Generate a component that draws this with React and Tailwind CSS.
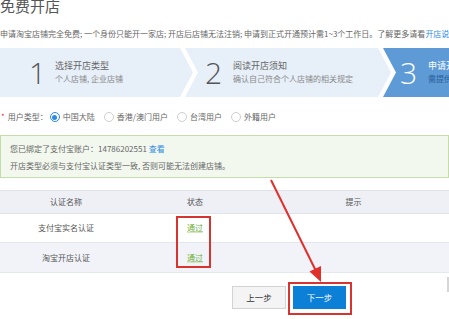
import React from 'react';

const cjk = { fontFamily: '"Noto Sans CJK SC", "Noto Sans", sans-serif' };

function Radio({ checked }) {
  if (checked) {
    return (
      <span className="w-[10px] h-[10px] rounded-full border border-[#2f8ae5] flex items-center justify-center mr-[3px]">
        <span className="w-[5px] h-[5px] rounded-full bg-[#2f8ae5]" />
      </span>
    );
  }
  return <span className="w-[10px] h-[10px] rounded-full border border-[#cfcfcf] bg-white mr-[3px]" />;
}

export default function App() {
  const options = [
    { label: '中国大陆', checked: true },
    { label: '香港/澳门用户' },
    { label: '台湾用户' },
    { label: '外籍用户' },
  ];

  const rows = [
    { name: '支付宝实名认证', status: '通过', bg: 'bg-white' },
    { name: '淘宝开店认证', status: '通过', bg: 'bg-[#f1f3f8]' },
  ];

  return (
    <div className="relative w-[449px] h-[319px] overflow-hidden bg-white text-[#666]" style={cjk}>
      {/* Title */}
      <div className="-mt-[2px] h-[16px] leading-[16px] text-[15px] text-[#555] whitespace-nowrap">免费开店</div>

      {/* Notice */}
      <div className="mt-[13px] h-[14px] leading-[14px] text-[8px] text-[#666] whitespace-nowrap">
        申请淘宝店铺完全免费; 一个身份只能开一家店; 开店后店铺无法注销; 申请到正式开通预计需1~3个工作日。了解更多请看
        <span className="text-[#2f8ae5]">开店说明</span>
      </div>

      {/* Steps */}
      <div className="mt-[7px] h-[49px] flex">
        <div className="w-[193px] shrink-0 h-full bg-[#e7eff9] flex items-center [clip-path:polygon(0_0,180px_0,193px_50%,180px_100%,0_100%)]">
          <span className="ml-[29px] w-[18px] text-[30px] font-light leading-none text-[#555]" style={{ fontFamily: '"Open Sans", sans-serif' }}>1</span>
          <div className="ml-[8px] flex flex-col">
            <span className="text-[9px] leading-[12px] text-[#666]">选择开店类型</span>
            <span className="text-[8px] leading-[12px] text-[#888] mt-[1px]">个人店铺, 企业店铺</span>
          </div>
        </div>
        <div className="-ml-[8px] w-[206px] shrink-0 h-full bg-[#e7eff9] flex items-center [clip-path:polygon(0_0,193px_0,206px_50%,193px_100%,0_100%,13px_50%)]">
          <span className="ml-[20px] w-[18px] text-[30px] font-light leading-none text-[#555]" style={{ fontFamily: '"Open Sans", sans-serif' }}>2</span>
          <div className="ml-[10px] flex flex-col">
            <span className="text-[9px] leading-[12px] text-[#666]">阅读开店须知</span>
            <span className="text-[8px] leading-[12px] text-[#888] mt-[1px] whitespace-nowrap">确认自己符合个人店铺的相关规定</span>
          </div>
        </div>
        <div className="-ml-[8px] flex-1 h-full bg-[#5d9ad6] flex items-center [clip-path:polygon(0_0,100%_0,100%_100%,0_100%,13px_50%)]">
          <span className="ml-[17px] w-[18px] text-[30px] font-light leading-none text-white" style={{ fontFamily: '"Open Sans", sans-serif' }}>3</span>
          <div className="ml-[10px] flex flex-col whitespace-nowrap">
            <span className="text-[9px] leading-[12px] text-white">申请开店认证</span>
            <span className="text-[8px] leading-[12px] text-[#2a5f9a] mt-[1px]">需提供认证相关资料</span>
          </div>
        </div>
      </div>

      {/* User type */}
      <div className="mt-[10px] h-[20px] flex items-center text-[8px] whitespace-nowrap">
        <span className="ml-[1px] text-[#e4393c]">*</span>
        <span className="ml-[3px] mr-[2px] text-[#666]">用户类型：</span>
        {options.map((o, i) => (
          <span key={o.label} className={`flex items-center ${i > 0 ? 'ml-[9px]' : ''}`}>
            <Radio checked={o.checked} />
            <span className="text-[#666]">{o.label}</span>
          </span>
        ))}
      </div>

      {/* Alipay notice */}
      <div className="mt-[8px] h-[43px] border border-[#c3dcaa] bg-[#f2f8ee] pl-[9px] pt-[7px] text-[8px] leading-[12px] text-[#666] whitespace-nowrap">
        <div>
          您已绑定了支付宝账户：14786202551 <span className="text-[#2f8ae5]">查看</span>
        </div>
        <div className="mt-[5px]">开店类型必须与支付宝认证类型一致, 否则可能无法创建店铺。</div>
      </div>

      {/* Table */}
      <div className="mt-[12px] text-[8px] text-[#555]">
        <div className="h-[24px] flex items-center bg-[#eef0f5] border-y border-[#dfe2e9]">
          <span className="w-[132px] text-center">认证名称</span>
          <span className="w-[126px] text-center">状态</span>
          <span className="flex-1 text-center">提示</span>
        </div>
        {rows.map((r, i) => (
          <div key={r.name} className={`${i === 0 ? 'h-[29px]' : 'h-[30px]'} flex items-center border-b border-[#e4e7ee] ${r.bg}`}>
            <span className="w-[132px] text-center">{r.name}</span>
            <span className="w-[126px] text-center text-[#6fae35] underline decoration-[#d3e8c0]">{r.status}</span>
            <span className="flex-1" />
          </div>
        ))}
      </div>

      {/* Buttons */}
      <div className="mt-[13px] flex pl-[232px] gap-[7px] text-[8.5px]">
        <button className="w-[54px] h-[23px] border border-[#d3d3d3] bg-[#f4f4f4] text-[#333]">上一步</button>
        <button className="w-[53px] h-[23px] bg-[#0b80d6] text-white">下一步</button>
      </div>

      {/* Annotations */}
      <div className="absolute left-[176px] top-[216px] w-[35px] h-[52px] border-2 border-[#d8342f]" />
      <div className="absolute left-[288px] top-[282px] w-[64px] h-[33px] border-2 border-[#d8342f]" />
      <div className="absolute right-0 top-[277px] w-[2px] h-[15px] bg-[#d6d6d6]" />
      <svg className="absolute inset-0 pointer-events-none" width="449" height="319" viewBox="0 0 449 319">
        <line x1="271" y1="180" x2="316" y2="271" stroke="#e0302c" strokeWidth="2" />
        <polygon points="321,282 309.5,271.5 321,266" fill="#e0302c" />
      </svg>
    </div>
  );
}
